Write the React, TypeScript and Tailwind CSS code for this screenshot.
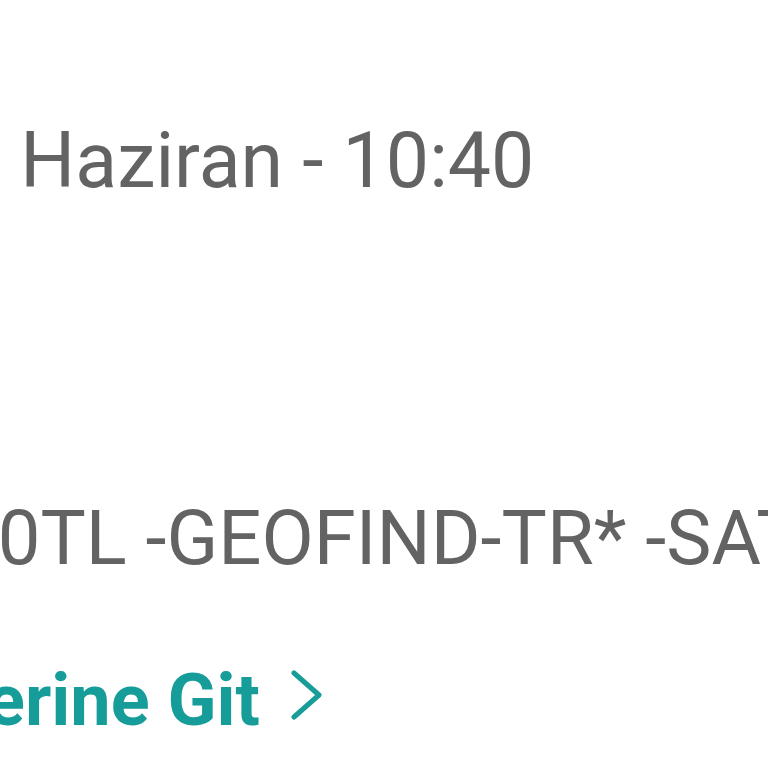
export default function App() {
  return (
    <div
      className="relative h-[768px] w-[768px] overflow-hidden bg-white"
      style={{ fontFamily: 'Roboto, "Liberation Sans", sans-serif' }}
    >
      {/* date & time row */}
      <div className="ml-[-42px] mt-[123px] whitespace-nowrap text-[77px] leading-none text-[#636363]">
        4 Haziran - 10:40
      </div>

      {/* transaction description */}
      <div className="ml-[-45px] mt-[300px] whitespace-nowrap text-[76px] leading-none text-[#636363]">
        00TL -GEOFIND-TR* -SATIŞ
      </div>

      {/* link row */}
      <div className="ml-[-14px] mt-[89px] flex items-center gap-[30px] whitespace-nowrap">
        <span className="text-[72px] font-bold leading-none text-[#179d99]">erine Git</span>
        <svg width="34" height="50" viewBox="0 0 34 50" fill="none" className="mt-[-12px]">
          <path d="M4 3 L29 25 L4 47" stroke="#179d99" strokeWidth="5" strokeLinecap="round" strokeLinejoin="round" />
        </svg>
      </div>
    </div>
  );
}
